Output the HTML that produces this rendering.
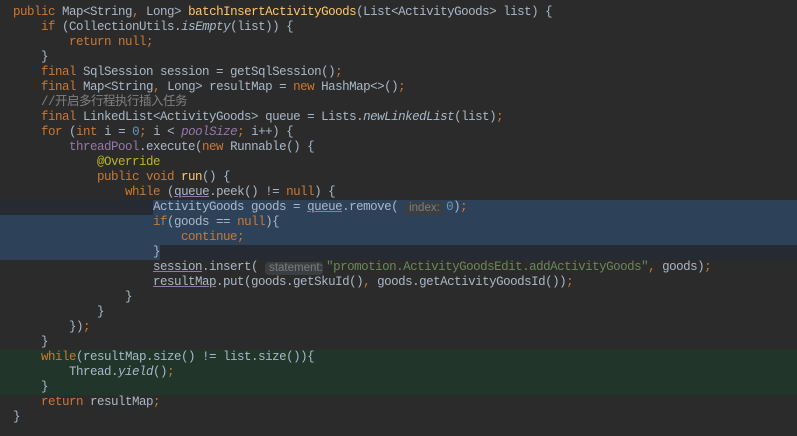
<!DOCTYPE html>
<html><head><meta charset="utf-8"><style>
html,body{margin:0;padding:0;background:#2b2b2b;width:797px;height:436px;overflow:hidden}
.c{position:absolute;left:0;top:5px;width:797px;font-family:"Liberation Mono","Noto Sans CJK SC",monospace;font-size:12.5px;letter-spacing:-0.5px;line-height:15px;color:#a9b7c6}
.l{height:15px;padding-left:13px;position:relative;white-space:pre}
.k{color:#cc7832}.m{color:#ffc66d}.cm{color:#808080}.s{color:#6a8759}.p{color:#9876aa}.u{text-decoration:underline;text-decoration-color:#9876aa;color:#a9b7c6}.i{font-style:italic}.a{color:#bbb529}.n{color:#6897bb}
.h{display:inline-block;box-sizing:border-box;height:13px;line-height:13px;vertical-align:-1px;background:#3b3f41;color:#7a7e80;border-radius:4px;font-size:11.5px;letter-spacing:0;padding-left:4px;margin-right:3px;font-family:"Liberation Sans",sans-serif}
.bg{position:absolute;left:0;width:797px}
</style></head><body>
<div class="bg" style="top:200px;height:15px;background:#262b33"></div>
<div class="bg" style="top:200px;left:153px;width:644px;height:15px;background:#2d4259"></div>
<div class="bg" style="top:215px;height:30px;background:#2d4259"></div>
<div class="bg" style="top:245px;height:15px;background:#262b33"></div>
<div class="bg" style="top:245px;width:160px;height:15px;background:#2d4259"></div>
<div class="bg" style="top:350px;height:45px;background:#22352a"></div>
<div class="c"><div class="l"><span class="k">public </span>Map&lt;String<span class="k">, </span>Long&gt; <span class="m">batchInsertActivityGoods</span>(List&lt;ActivityGoods&gt; list) {</div><div class="l">    <span class="k">if </span>(CollectionUtils.<span class="i">isEmpty</span>(list)) {</div><div class="l">        <span class="k">return null;</span></div><div class="l">    }</div><div class="l">    <span class="k">final </span>SqlSession session = getSqlSession()<span class="k">;</span></div><div class="l">    <span class="k">final </span>Map&lt;String<span class="k">, </span>Long&gt; resultMap = <span class="k">new </span>HashMap&lt;&gt;()<span class="k">;</span></div><div class="l"><span class="cm">    //开启多行程执行插入任务</span></div><div class="l">    <span class="k">final </span>LinkedList&lt;ActivityGoods&gt; queue = Lists.<span class="i">newLinkedList</span>(list)<span class="k">;</span></div><div class="l">    <span class="k">for </span>(<span class="k">int </span>i = <span class="n">0</span><span class="k">; </span>i &lt; <span class="p i">poolSize</span><span class="k">; </span>i++) {</div><div class="l">        <span class="p">threadPool</span>.execute(<span class="k">new </span>Runnable() {</div><div class="l">            <span class="a">@Override</span></div><div class="l">            <span class="k">public void </span><span class="m">run</span>() {</div><div class="l">                <span class="k">while </span>(<span class="u">queue</span>.peek() != <span class="k">null</span>) {</div><div class="l">                    ActivityGoods goods = <span class="u">queue</span>.remove( <span class="h" style="width:38px">index:</span><span class="n">0</span>)<span class="k">;</span></div><div class="l">                    <span class="k">if</span>(goods == <span class="k">null</span>){</div><div class="l">                        <span class="k">continue;</span></div><div class="l">                    }</div><div class="l">                    <span class="u">session</span>.insert( <span class="h" style="width:58px">statement:</span><span class="s">"promotion.ActivityGoodsEdit.addActivityGoods"</span><span class="k">, </span>goods)<span class="k">;</span></div><div class="l">                    <span class="u">resultMap</span>.put(goods.getSkuId()<span class="k">, </span>goods.getActivityGoodsId())<span class="k">;</span></div><div class="l">                }</div><div class="l">            }</div><div class="l">        })<span class="k">;</span></div><div class="l">    }</div><div class="l">    <span class="k">while</span>(resultMap.size() != list.size()){</div><div class="l">        Thread.<span class="i">yield</span>()<span class="k">;</span></div><div class="l">    }</div><div class="l">    <span class="k">return </span>resultMap<span class="k">;</span></div><div class="l">}</div></div>
</body></html>
